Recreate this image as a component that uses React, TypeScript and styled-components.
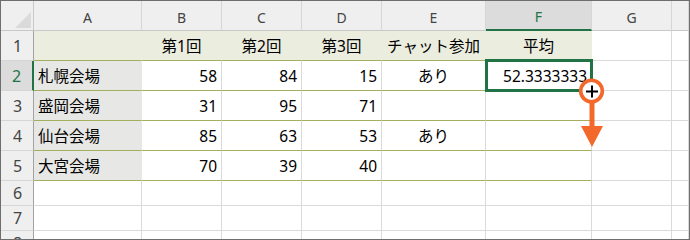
import React from 'react';
import styled, { createGlobalStyle } from 'styled-components';

const GlobalStyle = createGlobalStyle`
  html, body { margin: 0; padding: 0; background: #ffffff; }
  body { font-family: "Noto Sans", "Noto Sans CJK JP", sans-serif; }
`;

const GRID = '#dadada';
const RULE = '#a4ae5c';
const ACCENT = '#217346';
const ORANGE = '#f3692b';

const Frame = styled.div`
  position: relative;
  box-sizing: border-box;
  width: 690px;
  height: 240px;
  border: 1px solid #6e6e6e;
  overflow: hidden;
  background: #fff;
`;

/* Row 8 keeps its full height and is clipped by the frame, like a scrolled sheet */
const Sheet = styled.div`
  display: grid;
  grid-template-columns: 33px 108px 80px 80px 80px 104px 106px 80px 1fr;
  grid-template-rows: 30px 30px 30px 30px 30px 30px 25px 25px 25px;
  width: 100%;
`;

const Corner = styled.div`
  position: relative;
  box-sizing: border-box;
  background: #efefef;
  border-right: 1px solid #c8c8c8;
  border-bottom: 1px solid #c8c8c8;
`;

const CornerMark = styled.div`
  position: absolute;
  right: 2px;
  bottom: 2px;
  width: 0;
  height: 0;
  border-left: 16px solid transparent;
  border-bottom: 16px solid #dadada;
`;

const ColHeader = styled.div<{ $active?: boolean }>`
  box-sizing: border-box;
  display: flex;
  align-items: center;
  justify-content: center;
  padding-top: 3px;
  background: ${p => (p.$active ? '#dcdcdc' : '#efefef')};
  border-right: 1px solid #d6d6d6;
  border-bottom: ${p => (p.$active ? `2px solid ${ACCENT}` : '1px solid #c8c8c8')};
  color: ${p => (p.$active ? ACCENT : '#444444')};
  font-size: 14px;
`;

const RowHeader = styled.div<{ $active?: boolean }>`
  box-sizing: border-box;
  display: flex;
  align-items: center;
  justify-content: center;
  padding-left: ${p => (p.$active ? '0' : '1px')};
  background: ${p => (p.$active ? '#dcdcdc' : '#efefef')};
  border-right: ${p => (p.$active ? `2px solid ${ACCENT}` : '1px solid #a3a3a3')};
  border-bottom: 1px solid #d6d6d6;
  color: ${p => (p.$active ? ACCENT : '#444444')};
  font-size: 16px;
`;

type Align = 'left' | 'center' | 'right';

const Cell = styled.div<{ $fill?: string; $rule?: boolean; $align: Align }>`
  position: relative;
  box-sizing: border-box;
  display: flex;
  align-items: center;
  justify-content: ${p =>
    p.$align === 'left' ? 'flex-start' : p.$align === 'right' ? 'flex-end' : 'center'};
  padding: 0 4px;
  background: ${p => p.$fill ?? '#ffffff'};
  border-right: 1px solid ${p => p.$fill ?? GRID};
  border-bottom: 1px solid ${p => (p.$rule ? RULE : GRID)};
  color: #000000;
  font-size: 15.5px;
  white-space: nowrap;
`;

const Selection = styled.div`
  position: absolute;
  left: 484px;
  top: 58px;
  width: 108px;
  height: 33px;
  box-sizing: border-box;
  border: 3px solid ${ACCENT};
  pointer-events: none;
`;

const FillHint = styled.svg`
  position: absolute;
  left: 575px;
  top: 75px;
`;

const columns = ['A', 'B', 'C', 'D', 'E', 'F', 'G', ''];

const rows: string[][] = [
  ['', '第1回', '第2回', '第3回', 'チャット参加', '平均', '', ''],
  ['札幌会場', '58', '84', '15', 'あり', '52.3333333', '', ''],
  ['盛岡会場', '31', '95', '71', '', '', '', ''],
  ['仙台会場', '85', '63', '53', 'あり', '', '', ''],
  ['大宮会場', '70', '39', '40', '', '', '', ''],
  ['', '', '', '', '', '', '', ''],
  ['', '', '', '', '', '', '', ''],
  ['', '', '', '', '', '', '', ''],
];

const ACTIVE_COL = 5;
const ACTIVE_ROW = 1;

function cellProps(r: number, c: number): { $fill?: string; $rule?: boolean; $align: Align } {
  const inTable = r <= 4 && c <= 5;
  if (r === 0 && c <= 5) return { $fill: '#ebeddf', $rule: true, $align: 'center' };
  if (inTable && c === 0) return { $fill: '#e7e7e5', $rule: true, $align: 'left' };
  if (inTable && c === 4) return { $rule: true, $align: 'center' };
  if (inTable) return { $rule: true, $align: 'right' };
  return { $align: 'left' };
}

export default function App() {
  return (
    <>
      <GlobalStyle />
      <Frame>
        <Sheet>
          <Corner>
            <CornerMark />
          </Corner>
          {columns.map((col, c) => (
            <ColHeader key={`h${c}`} $active={c === ACTIVE_COL}>
              {col}
            </ColHeader>
          ))}
          {rows.map((row, r) => (
            <React.Fragment key={`r${r}`}>
              <RowHeader $active={r === ACTIVE_ROW}>{r + 1}</RowHeader>
              {row.map((value, c) => (
                <Cell key={`c${r}-${c}`} {...cellProps(r, c)}>
                  {value}
                </Cell>
              ))}
            </React.Fragment>
          ))}
        </Sheet>
        <Selection />
        <FillHint width="32" height="72" viewBox="0 0 32 72">
          <rect x="13.5" y="24" width="5" height="28" fill={ORANGE} />
          <polygon points="5,50 27,50 16,71" fill={ORANGE} />
          <circle cx="15.5" cy="15" r="10.8" fill="#ffffff" stroke={ORANGE} strokeWidth="3.6" />
          <path d="M10 15.5 H22 M16 9.5 V21.5" stroke="#000000" strokeWidth="2" />
        </FillHint>
      </Frame>
    </>
  );
}
